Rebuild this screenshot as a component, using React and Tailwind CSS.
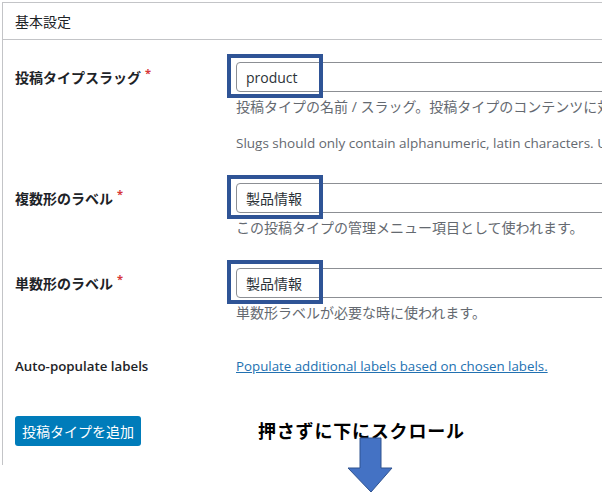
import React from 'react';

const jp = { fontFamily: '"Open Sans", "Noto Sans CJK JP", sans-serif' };

const Required = () => (
  <span className="text-[#d63638] text-[11px] font-bold relative -top-[4px] ml-[4px]">*</span>
);

// Input with the blue annotation frame drawn over it
const FramedInput = ({ value }) => (
  <div className="relative h-[30px]">
    <div className="w-[420px] h-[30px] border border-[#8c8f94] rounded-[4px] bg-white flex items-center pl-[9px] text-[14px] text-[#2c3338]">
      {value}
    </div>
    <div className="absolute left-[-9px] top-[-8px] w-[96px] h-[44px] border-[4px] border-[#2f5496] pointer-events-none"></div>
  </div>
);

const Label = ({ children, required }) => (
  <div className="w-[233px] shrink-0 pl-[12px] h-[30px] flex items-center text-[14px] font-bold text-[#1d2327]">
    {children}
    {required && <Required />}
  </div>
);

export default function App() {
  return (
    <div className="relative w-[602px] h-[493px] overflow-hidden bg-white" style={jp}>
      <div className="ml-[2px] mt-[2px] border-l border-t border-[#c3c4c7] w-[700px]">
        {/* Header */}
        <div className="h-[37px] border-b border-[#c3c4c7] flex items-center pl-[12px] text-[14px] text-[#1d2327]">
          基本設定
        </div>

        {/* Slug */}
        <div className="flex pt-[22px] pb-[15px]">
          <Label required>投稿タイプスラッグ</Label>
          <div>
            <FramedInput value="product" />
            <p className="mt-[5px] leading-[20px] text-[14px] text-[#646970] whitespace-nowrap">
              投稿タイプの名前 / スラッグ。投稿タイプのコンテンツに対するクエリに使われます。
            </p>
            <p className="mt-[16px] leading-[20px] text-[13.5px] text-[#646970] whitespace-nowrap">
              Slugs should only contain alphanumeric, latin characters. Underscores should be used in place of spaces.
            </p>
          </div>
        </div>

        {/* Plural */}
        <div className="flex py-[15px]">
          <Label required>複数形のラベル</Label>
          <div>
            <FramedInput value="製品情報" />
            <p className="mt-[5px] leading-[20px] text-[14px] text-[#646970] whitespace-nowrap">
              この投稿タイプの管理メニュー項目として使われます。
            </p>
          </div>
        </div>

        {/* Singular */}
        <div className="flex py-[15px]">
          <Label required>単数形のラベル</Label>
          <div>
            <FramedInput value="製品情報" />
            <p className="mt-[5px] leading-[20px] text-[14px] text-[#646970] whitespace-nowrap">
              単数形ラベルが必要な時に使われます。
            </p>
          </div>
        </div>

        {/* Auto-populate */}
        <div className="flex items-center pt-[19px] pb-[15px] h-[54px]">
          <div className="w-[233px] shrink-0 pl-[12px] text-[13.3px] font-semibold text-[#1d2327]">
            Auto-populate labels
          </div>
          <a href="#" className="text-[13.3px] text-[#2271b1] underline">
            Populate additional labels based on chosen labels.
          </a>
        </div>

        {/* Submit */}
        <div className="flex items-center pt-[24px] pb-[19px]">
          <button className="ml-[12px] w-[126px] h-[30px] rounded-[3px] bg-[#007cba] text-white text-[14px]">
            投稿タイプを追加
          </button>
          <div className="ml-[117px] text-[18px] font-bold text-black tracking-[0.8px]">
            押さずに下にスクロール
          </div>
        </div>
      </div>

      {/* annotation arrow */}
      <svg className="absolute left-[347px] top-[437px]" width="47" height="56" viewBox="0 0 47 56">
        <path d="M13 1 H34 V31 H45 L24 55 L1 31 H13 Z" fill="#4472c4" stroke="#2f528f" strokeWidth="1" />
      </svg>
    </div>
  );
}
